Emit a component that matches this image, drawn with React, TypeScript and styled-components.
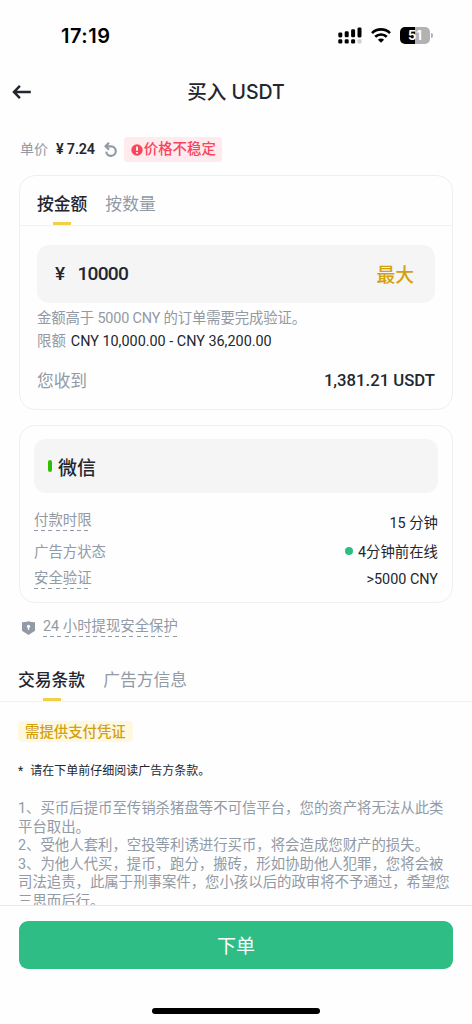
import React from 'react';
import styled, { createGlobalStyle } from 'styled-components';

const ink = '#23262f';
const muted = '#929aa5';
const line = '#eeeff2';
const gold = '#d3a10f';
const green = '#2ebd85';

const GlobalStyle = createGlobalStyle`
  * { box-sizing: border-box; }
  body {
    margin: 0;
    background: #fefefe;
    color: ${ink};
    font-family: Roboto, "Noto Sans CJK SC", sans-serif;
    font-size: 14.4px;
  }
`;

const Screen = styled.div`
  width: 472px;
  height: 1024px;
  overflow: hidden;
  display: flex;
  flex-direction: column;
  background: #fefefe;
`;

const StatusBar = styled.div`
  height: 68px;
  flex: none;
  display: flex;
  align-items: center;
  justify-content: space-between;
  padding: 3px 39px 0 61px;
`;

const Clock = styled.span`
  font: 600 20px/24px Inter, sans-serif;
  letter-spacing: 0.5px;
  color: #000;
`;

const StatusIcons = styled.div`
  display: flex;
  align-items: center;
  gap: 9px;
`;

const Header = styled.header`
  height: 48px;
  flex: none;
  display: grid;
  grid-template-columns: 40px 1fr 40px;
  align-items: center;
  padding: 0 12px;
`;

const Title = styled.h1`
  margin: 0;
  text-align: center;
  font: 500 19.5px/28px Inter, "Noto Sans CJK SC", sans-serif;
  white-space: nowrap;
`;

const PriceRow = styled.div`
  height: 59px;
  flex: none;
  display: flex;
  align-items: center;
  padding: 8px 20px 0;
`;

const Latin = styled.span<{ $track?: number; $weight?: number; $size?: number }>`
  font-size: ${p => p.$size ?? 14.4}px;
  font-weight: ${p => p.$weight ?? 400};
  letter-spacing: ${p => p.$track ?? 0}px;
  color: ${ink};
  white-space: nowrap;
`;

const Muted = styled.span<{ $size?: number; $track?: number }>`
  font-size: ${p => p.$size ?? 14.4}px;
  letter-spacing: ${p => p.$track ?? 0}px;
  color: ${muted};
  white-space: nowrap;
`;

const Inline = styled.div<{ $gap: number }>`
  display: flex;
  align-items: baseline;
  gap: ${p => p.$gap}px;
  line-height: 20px;
`;

const PriceText = styled(Inline)`
  margin-right: 9px;
`;

const Limits = styled(Inline)`
  padding-top: 4px;
`;

const Alert = styled.span`
  display: flex;
  align-items: center;
  gap: 1px;
  height: 25px;
  margin-left: 6px;
  padding: 0 6px 0 7px;
  border-radius: 3px;
  background: #ffeaee;
  color: #f6465d;
  font-weight: 500;
  line-height: 27px;
`;

const Card = styled.section<{ $height: number; $pad: string }>`
  height: ${p => p.$height}px;
  flex: none;
  margin: 0 19px;
  padding: ${p => p.$pad};
  border: 1px solid ${line};
  border-radius: 16px;

  & + & {
    margin-top: 15px;
  }
`;

const Tabs = styled.div<{ $height: number; $inset: number }>`
  height: ${p => p.$height}px;
  flex: none;
  display: flex;
  gap: 18px;
  padding-left: ${p => p.$inset}px;
  border-bottom: 1px solid #f1f2f4;
`;

const Tab = styled.div<{ $active?: boolean; $top: number }>`
  display: flex;
  flex-direction: column;
  align-items: center;
  justify-content: space-between;
  padding-top: ${p => p.$top}px;
  font-size: 16.8px;
  line-height: 24px;
  font-weight: ${p => (p.$active ? 500 : 400)};
  color: ${p => (p.$active ? ink : muted)};
`;

const Indicator = styled.span`
  width: 18px;
  height: 3px;
  background: #f3cf45;
`;

const AmountBox = styled.div`
  height: 57.5px;
  margin: 19px 17px 0;
  padding: 0 21px 0 18px;
  display: flex;
  align-items: center;
  border-radius: 12px;
  background: #f5f5f5;
`;

const Currency = styled(Latin)`
  width: 22.5px;
`;

const MaxButton = styled.button`
  margin-left: auto;
  padding: 0;
  border: 0;
  background: none;
  font: 500 18.8px/28px "Noto Sans CJK SC", sans-serif;
  color: ${gold};
`;

const Row = styled.div<{ $height: number; $inset?: number }>`
  height: ${p => p.$height}px;
  padding: 0 ${p => p.$inset ?? 0}px;
  display: flex;
  align-items: center;
  justify-content: space-between;
`;

const Method = styled.div`
  height: 54px;
  padding-left: 14px;
  display: flex;
  align-items: center;
  gap: 6px;
  border-radius: 12px;
  background: #f5f5f5;
  font-size: 19px;
  font-weight: 500;
`;

const MethodMark = styled.span`
  width: 4px;
  height: 12px;
  border-radius: 2px;
  background: #2fc100;
`;

const Details = styled.div`
  margin-top: 14px;
`;

const Hint = styled.span<{ $width: number }>`
  display: block;
  height: 19px;
  line-height: 18px;
  color: ${muted};
  white-space: nowrap;
  background: repeating-linear-gradient(90deg, ${muted} 0 4px, transparent 4px 7.2px) 0 100% / ${p => p.$width}px 1.2px no-repeat;
`;

const Value = styled.span`
  display: flex;
  align-items: center;
  gap: 5px;
  white-space: nowrap;
`;

const Dot = styled.i`
  width: 8px;
  height: 8px;
  border-radius: 50%;
  background: ${green};
`;

const Protection = styled.div`
  height: 49px;
  flex: none;
  display: flex;
  align-items: center;
  gap: 8px;
  padding-left: 22px;
`;

const Terms = styled.section`
  height: 203px;
  flex: none;
  overflow: hidden;
  padding: 19px 18px 0;
`;

const Tag = styled.span`
  display: block;
  width: 115px;
  height: 21px;
  padding-left: 7px;
  border-radius: 4px;
  background: #fef8e0;
  color: ${gold};
  font-weight: 500;
  line-height: 24px;
`;

const Reminder = styled.p`
  margin: 20px 0 0;
  display: flex;
  gap: 7px;
  font-size: 12px;
  line-height: 18px;
`;

const Clauses = styled.div`
  width: 440px;
  margin-top: 20px;
  color: ${muted};
  line-height: 18.6px;
  white-space: nowrap;
`;

const Footer = styled.footer`
  flex: 1;
  display: flex;
  flex-direction: column;
  align-items: center;
  justify-content: space-between;
  padding: 14.5px 19px 10px;
  border-top: 1px solid #e6e8eb;
`;

const OrderButton = styled.button`
  width: 100%;
  height: 48px;
  border: 0;
  border-radius: 9px;
  background: ${green};
  color: #fff;
  font: 400 19px/28px "Noto Sans CJK SC", sans-serif;
`;

const HomeBar = styled.div`
  width: 168px;
  height: 6px;
  border-radius: 3px;
  background: #000;
`;

const Signal = () => (
  <svg width="24" height="17" viewBox="0 0 24 17">
    {[0, 6.4, 12.8, 19.2].map((x, i) => (
      <g key={x}>
        <rect x={x + 0.3} y={[5.4, 4.3, 2.3, 0.4][i]} width="4" height={[5, 6, 8, 10][i]} rx="1.3" fill="#000" />
        <rect x={x + 0.3} y="12.3" width="4" height="4.3" rx="1.3" fill={i === 3 ? '#cfcfcf' : '#000'} />
      </g>
    ))}
  </svg>
);

const Wifi = () => (
  <svg width="20" height="15" viewBox="0 0 20 15" fill="none" stroke="#000" strokeWidth="2.7">
    <path d="M1 5.1C6 .2 14 .2 19 5.1" />
    <path d="M4.2 8.8c3.3-3.1 8.3-3.1 11.6 0" />
    <path d="M10 14.8 6.9 11.8c1.8-1.6 4.4-1.6 6.2 0Z" fill="#000" stroke="none" />
  </svg>
);

const BatteryShell = styled.div`
  display: flex;
  align-items: center;
  gap: 1px;
`;

const BatteryBody = styled.span`
  width: 30px;
  height: 17px;
  border-radius: 5px;
  background: linear-gradient(90deg, #000 51%, #b2b2b4 51%);
  color: #fff;
  text-align: center;
  font: 700 13px/17px Inter, sans-serif;
`;

const BatteryTip = styled.span`
  width: 2px;
  height: 5px;
  border-radius: 0 2px 2px 0;
  background: #b2b2b4;
`;

const BackArrow = () => (
  <svg width="20" height="16" viewBox="0 0 20 16" fill="none" stroke={ink} strokeWidth="2.5">
    <path d="M2 8h16.8M7.9 1.8 2 8l5.9 6.2" />
  </svg>
);

const Refresh = () => (
  <svg width="14" height="16" viewBox="0 0 14 16" fill="none" stroke={muted} strokeWidth="2.2">
    <path d="M2 4.3h5.1a4.8 4.8 0 1 1-4.9 5.4" />
    <path d="M5 .8 1.6 4.3 5 7.8" />
  </svg>
);

const Warn = () => (
  <svg width="12" height="12" viewBox="0 0 12 12">
    <circle cx="6" cy="6" r="5.7" fill="#f6465d" />
    <path d="M6 2.6v4.2M6 8v1.6" stroke="#fff" strokeWidth="1.7" />
  </svg>
);

const Shield = () => (
  <svg width="13" height="14" viewBox="0 0 13 14">
    <path d="M0 1.2q3.8 0 6.5-1 2.7 1 6.5 1v8.6L6.5 14 0 9.8Z" fill={muted} />
    <circle cx="6.5" cy="5.3" r="1.6" fill="#fff" />
    <path d="M6.5 5.3v3.6" stroke="#fff" strokeWidth="1.4" />
  </svg>
);

const clauses = [
  '1、买币后提币至传销杀猪盘等不可信平台，您的资产将无法从此类',
  '平台取出。',
  '2、受他人套利，空投等利诱进行买币，将会造成您财产的损失。',
  '3、为他人代买，提币，跑分，搬砖，形如协助他人犯罪，您将会被',
  '司法追责，此属于刑事案件，您小孩以后的政审将不予通过，希望您',
  '三思而后行。',
];

export default function App() {
  return (
    <Screen>
      <GlobalStyle />
      <StatusBar>
        <Clock>17:19</Clock>
        <StatusIcons>
          <Signal />
          <Wifi />
          <BatteryShell>
            <BatteryBody>51</BatteryBody>
            <BatteryTip />
          </BatteryShell>
        </StatusIcons>
      </StatusBar>
      <Header>
        <BackArrow />
        <Title>买入 USDT</Title>
      </Header>
      <PriceRow>
        <PriceText $gap={8}>
          <Muted $size={14}>单价</Muted>
          <Latin $weight={600} $track={-0.2}>¥ 7.24</Latin>
        </PriceText>
        <Refresh />
        <Alert>
          <Warn />
          价格不稳定
        </Alert>
      </PriceRow>

      <Card $height={235} $pad="0">
        <Tabs $height={50} $inset={17}>
          <Tab $active $top={16}>
            按金额
            <Indicator />
          </Tab>
          <Tab $top={16}>按数量</Tab>
        </Tabs>
        <AmountBox>
          <Currency $size={19.2} $weight={500}>¥</Currency>
          <Latin $size={19.2} $weight={500} $track={-0.8}>10000</Latin>
          <MaxButton>最大</MaxButton>
        </AmountBox>
        <Row $height={28} $inset={17}>
          <Muted $track={-0.15}>金额高于 5000 CNY 的订单需要完成验证。</Muted>
        </Row>
        <Row $height={19} $inset={17}>
          <Limits $gap={5}>
            <Muted>限额</Muted>
            <Latin>CNY 10,000.00 - CNY 36,200.00</Latin>
          </Limits>
        </Row>
        <Row $height={61} $inset={17}>
          <Muted $size={16.7}>您收到</Muted>
          <Latin $size={16.7} $weight={500}>1,381.21 USDT</Latin>
        </Row>
      </Card>

      <Card $height={178} $pad="13px 14px 0">
        <Method>
          <MethodMark />
          微信
        </Method>
        <Details>
          <Row $height={29}>
            <Hint $width={56}>付款时限</Hint>
            <Value>15 分钟</Value>
          </Row>
          <Row $height={29}>
            <Muted>广告方状态</Muted>
            <Value>
              <Dot />
              4分钟前在线
            </Value>
          </Row>
          <Row $height={29}>
            <Hint $width={56}>安全验证</Hint>
            <Value>&gt;5000 CNY</Value>
          </Row>
        </Details>
      </Card>

      <Protection>
        <Shield />
        <Hint $width={134}>24 小时提现安全保护</Hint>
      </Protection>

      <Tabs $height={50} $inset={18}>
        <Tab $active $top={16}>
          交易条款
          <Indicator />
        </Tab>
        <Tab $top={16}>广告方信息</Tab>
      </Tabs>
      <Terms>
        <Tag>需提供支付凭证</Tag>
        <Reminder>
          <span>*</span>
          <span>请在下单前仔细阅读广告方条款。</span>
        </Reminder>
        <Clauses>
          {clauses.map(text => (
            <div key={text}>{text}</div>
          ))}
        </Clauses>
      </Terms>
      <Footer>
        <OrderButton>下单</OrderButton>
        <HomeBar />
      </Footer>
    </Screen>
  );
}
